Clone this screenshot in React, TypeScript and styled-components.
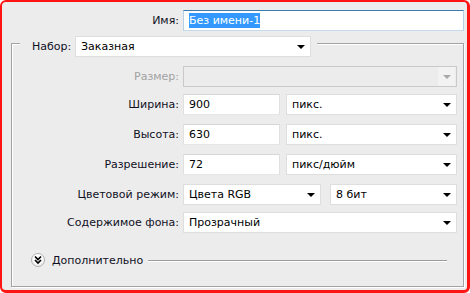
import React from "react";
import styled, { createGlobalStyle } from "styled-components";

const Global = createGlobalStyle`
  html, body { margin: 0; padding: 0; background: #ffffff; }
  * { box-sizing: border-box; }
`;

const Window = styled.div`
  width: 470px;
  height: 293px;
  border: solid #ff1414;
  border-width: 2px 3px 3px 2px;
  border-radius: 6px;
  background: #ececec;
  font-family: "DejaVu Sans", Tahoma, sans-serif;
  font-size: 11px;
  color: #101024;
  display: flex;
  flex-direction: column;
  overflow: hidden;
`;

const Row = styled.div<{ $top?: number }>`
  display: flex;
  align-items: center;
  gap: 4px;
  height: 21px;
  margin-top: ${(p) => p.$top ?? 0}px;
`;

const Label = styled.span<{ $width: number; $disabled?: boolean }>`
  width: ${(p) => p.$width}px;
  flex: none;
  text-align: right;
  white-space: nowrap;
  color: ${(p) => (p.$disabled ? "#a2a2a2" : "#101024")};
`;

const Fields = styled.div`
  display: flex;
  align-items: center;
`;

const TextBox = styled.div<{ $width: number; $focused?: boolean }>`
  width: ${(p) => p.$width}px;
  height: 21px;
  flex: none;
  background: #ffffff;
  border: 1px solid #dadada;
  border-color: ${(p) =>
    p.$focused ? "#3d7bad #b7d0e8 #c5dbed #b7d0e8" : "#d6d6d6 #e0e0e0 #e6e6e6 #e0e0e0"};
  display: flex;
  align-items: center;
  padding-left: 5px;
  color: #000;
  white-space: nowrap;
`;

const Selected = styled.span`
  background: #3399ff;
  color: #ffffff;
  line-height: 15px;
`;

const SelectBox = styled.div<{ $width: number; $gapLeft?: number; $disabled?: boolean }>`
  width: ${(p) => p.$width}px;
  margin-left: ${(p) => p.$gapLeft ?? 0}px;
  height: 21px;
  flex: none;
  background: ${(p) => (p.$disabled ? "#ececec" : "#ffffff")};
  border: 1px solid ${(p) => (p.$disabled ? "#c9c9c9" : "#dedede")};
  display: flex;
  align-items: center;
  justify-content: space-between;
  padding-left: 5px;
  color: #000;
  white-space: nowrap;
`;

const ArrowCell = styled.span<{ $disabled?: boolean }>`
  width: 17px;
  height: 100%;
  display: flex;
  align-items: center;
  justify-content: center;
  background: ${(p) => (p.$disabled ? "#f2f2f2" : "transparent")};
  margin-right: 1px;
`;

const Arrow = styled.span<{ $disabled?: boolean }>`
  width: 0;
  height: 0;
  border-left: 4px solid transparent;
  border-right: 4px solid transparent;
  border-top: 4px solid ${(p) => (p.$disabled ? "#a8a8a8" : "#000")};
  margin-top: 1px;
`;

const Group = styled.div`
  margin: 12px 3px 3px 9px;
  border: 1px solid #a3a3a3;
  box-shadow: inset 1px 1px 0 #ffffff, 1px 1px 0 #ffffff;
  display: flex;
  flex-direction: column;
  flex: 1;
  padding-right: 5px;
`;

const Legend = styled.div`
  align-self: flex-start;
  margin: -8px 0 0 8px;
  padding: 0 6px 0 12px;
  background: #ececec;
  display: flex;
  align-items: center;
  gap: 4px;
  height: 21px;
`;

const MoreRow = styled.div`
  display: flex;
  align-items: center;
  margin: 20px 11px 0 19px;
  height: 14px;
  gap: 7px;
`;

const RoundButton = styled.span`
  width: 14px;
  height: 14px;
  flex: none;
  border-radius: 50%;
  border: 1px solid #b0b0b0;
  background: radial-gradient(circle at 50% 35%, #ffffff 40%, #e0e0e0 100%);
  display: flex;
  align-items: center;
  justify-content: center;
`;

const Rule = styled.span`
  flex: 1;
  height: 1px;
  background: #9c9c9c;
  box-shadow: 0 1px 0 #ffffff;
  margin-left: -2px;
`;

const Select = ({
  width,
  value,
  gapLeft,
  disabled,
}: {
  width: number;
  value?: string;
  gapLeft?: number;
  disabled?: boolean;
}) => (
  <SelectBox $width={width} $gapLeft={gapLeft} $disabled={disabled}>
    <span>{value}</span>
    <ArrowCell $disabled={disabled}>
      <Arrow $disabled={disabled} />
    </ArrowCell>
  </SelectBox>
);

const LABEL_W = 167;

export default function App() {
  return (
    <>
      <Global />
      <Window>
        <Row $top={8}>
          <Label $width={177}>Имя:</Label>
          <TextBox $width={281} $focused>
            <Selected>Без имени-1</Selected>
          </TextBox>
        </Row>
        <Group>
          <Legend>
            <Label $width={39}>Набор:</Label>
            <Select width={236} value="Заказная" />
          </Legend>
          <Row $top={9}>
            <Label $width={LABEL_W} $disabled>
              Размер:
            </Label>
            <Select width={274} disabled />
          </Row>
          <Row $top={7}>
            <Label $width={LABEL_W}>Ширина:</Label>
            <Fields>
              <TextBox $width={97}>900</TextBox>
              <Select width={171} gapLeft={6} value="пикс." />
            </Fields>
          </Row>
          <Row $top={9}>
            <Label $width={LABEL_W}>Высота:</Label>
            <Fields>
              <TextBox $width={97}>630</TextBox>
              <Select width={171} gapLeft={6} value="пикс." />
            </Fields>
          </Row>
          <Row $top={9}>
            <Label $width={LABEL_W}>Разрешение:</Label>
            <Fields>
              <TextBox $width={97}>72</TextBox>
              <Select width={171} gapLeft={6} value="пикс/дюйм" />
            </Fields>
          </Row>
          <Row $top={9}>
            <Label $width={LABEL_W}>Цветовой режим:</Label>
            <Fields>
              <Select width={138} value="Цвета RGB" />
              <Select width={127} gapLeft={9} value="8 бит" />
            </Fields>
          </Row>
          <Row $top={7}>
            <Label $width={LABEL_W}>Содержимое фона:</Label>
            <Select width={274} value="Прозрачный" />
          </Row>
          <MoreRow>
            <RoundButton>
              <svg width="10" height="10" viewBox="0 0 10 10">
                <path
                  d="M2 1.5 L5 4.5 L8 1.5 M2 5 L5 8 L8 5"
                  fill="none"
                  stroke="#000"
                  strokeWidth="1.7"
                />
              </svg>
            </RoundButton>
            <span>Дополнительно</span>
            <Rule />
          </MoreRow>
        </Group>
      </Window>
    </>
  );
}
